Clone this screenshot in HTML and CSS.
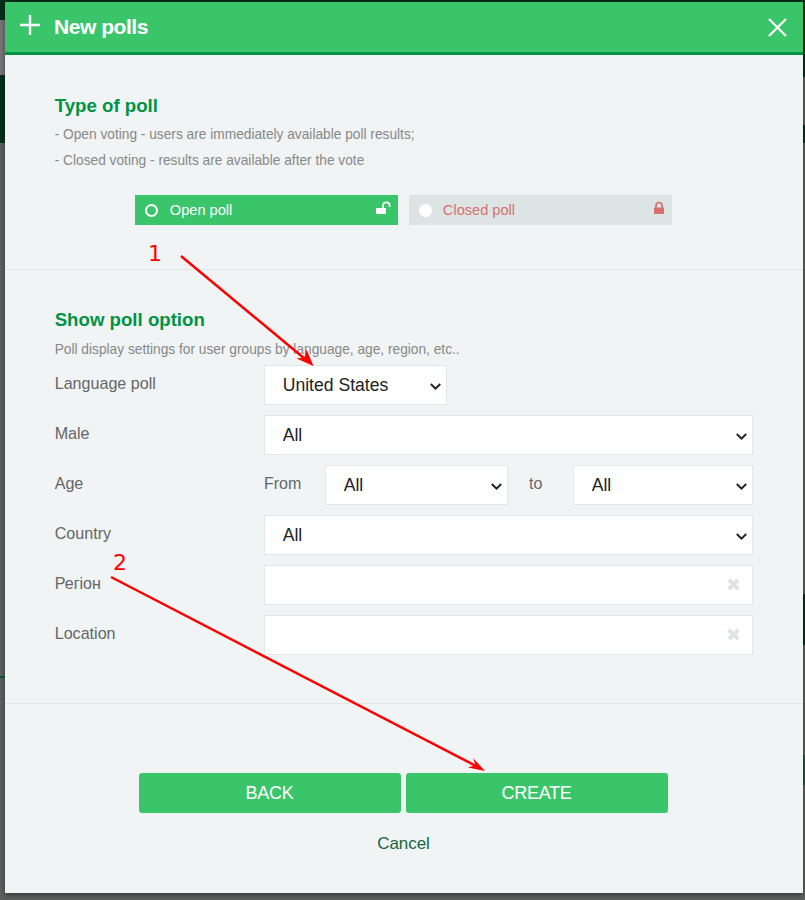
FILE: index.html
```html
<!DOCTYPE html>
<html lang="en">
<head>
<meta charset="utf-8">
<title>New polls</title>
<link rel="stylesheet" href="styles.css">
</head>
<body>
<div class="backdrop">
  <div class="side side-left">
    <div class="seg seg-dark h20"></div>
    <div class="seg seg-light h55"></div>
    <div class="seg seg-dark h68"></div>
    <div class="seg seg-grey h533"></div>
    <div class="seg seg-green h2"></div>
  </div>
  <div class="side side-right">
    <div class="seg seg-dark h77"></div>
    <div class="seg seg-grey h48"></div>
    <div class="seg seg-dark h18"></div>
    <div class="seg seg-grey h451"></div>
    <div class="seg seg-dark h51"></div>
    <div class="seg seg-grey h110"></div>
    <div class="seg seg-teal h30"></div>
  </div>
</div>
<main class="modal">
  <header class="modal-head">
    <svg class="icon-plus" viewBox="0 0 20 20" width="20" height="20"><path d="M10 0V20M0 10H20" stroke="#fff" stroke-width="2.4" fill="none"/></svg>
    <h1 class="modal-title">New polls</h1>
    <svg class="icon-close" viewBox="0 0 19 19" width="19" height="19"><path d="M1 1L18 18M18 1L1 18" stroke="#fff" stroke-width="2.2" fill="none"/></svg>
  </header>

  <section class="type-section">
    <h2 class="section-title">Type of poll</h2>
    <p class="hint hint-first">- Open voting - users are immediately available poll results;</p>
    <p class="hint hint-second">- Closed voting - results are available after the vote</p>
    <div class="toggles">
      <div class="toggle toggle-on">
        <span class="radio radio-on"></span>
        <span class="toggle-label">Open poll</span>
        <svg class="lock" viewBox="0 0 15 15" width="15" height="15"><path d="M0 7H10V13H0Z" fill="#fff"/><path d="M7 7V4.5C7 2.5 8.3 1.4 10.3 1.4C12.3 1.4 13.6 2.5 13.6 4.5V6" stroke="#fff" stroke-width="1.7" fill="none"/></svg>
      </div>
      <div class="toggle toggle-off">
        <span class="radio radio-off"></span>
        <span class="toggle-label">Closed poll</span>
        <svg class="lock" viewBox="0 0 15 15" width="15" height="15"><path d="M4 6.5H14V13H4Z" fill="#d97070"/><path d="M6 7V4.5C6 2.7 7.2 1.5 9 1.5C10.800 1.5 12 2.700 12 4.500V7" stroke="#d97070" stroke-width="1.7" fill="none"/></svg>
      </div>
    </div>
  </section>

  <section class="option-section">
    <h2 class="section-title">Show poll option</h2>
    <p class="hint hint-options">Poll display settings for user groups by language, age, region, etc..</p>
    <div class="form">
      <div class="row">
        <label class="row-label">Language poll</label>
        <select class="field field-select field-short"><option>United States</option></select>
      </div>
      <div class="row">
        <label class="row-label">Male</label>
        <select class="field field-select field-full"><option>All</option></select>
      </div>
      <div class="row">
        <label class="row-label">Age</label>
        <span class="age-word age-from">From</span>
        <select class="field field-select field-from"><option>All</option></select>
        <span class="age-word age-to">to</span>
        <select class="field field-select field-to"><option>All</option></select>
      </div>
      <div class="row">
        <label class="row-label">Country</label>
        <select class="field field-select field-full"><option>All</option></select>
      </div>
      <div class="row">
        <label class="row-label">Регіон</label>
        <div class="field field-full field-text">
          <svg class="icon-clear" viewBox="0 0 13 13" width="13" height="13"><path d="M1.800 1.800L11.200 11.200M11.200 1.800L1.800 11.200" stroke="#dce5e3" stroke-width="4" fill="none"/></svg>
        </div>
      </div>
      <div class="row">
        <label class="row-label">Location</label>
        <div class="field field-full field-text">
          <svg class="icon-clear" viewBox="0 0 13 13" width="13" height="13"><path d="M1.800 1.800L11.200 11.200M11.200 1.800L1.800 11.200" stroke="#dce5e3" stroke-width="4" fill="none"/></svg>
        </div>
      </div>
    </div>
  </section>

  <footer class="modal-foot">
    <div class="buttons">
      <button class="btn" type="button">BACK</button>
      <button class="btn" type="button">CREATE</button>
    </div>
    <a class="cancel">Cancel</a>
  </footer>
</main>

<svg class="annotations" viewBox="0 0 805 900" width="805" height="900">
  <line x1="181" y1="256" x2="308" y2="361.5" stroke="#ff0000" stroke-width="2.5"/>
  <path d="M313.5 366L296.500 358.500L304.500 357.500L306.500 349.500Z" fill="#ff0000"/>
  <line x1="111" y1="577" x2="478" y2="767" stroke="#ff0000" stroke-width="2.5"/>
  <path d="M485 771L468 767.500L475.500 765L473 758Z" fill="#ff0000"/>
</svg>
<span class="mark mark-one">1</span>
<span class="mark mark-two">2</span>
</body>
</html>
```

FILE: styles.css
```css
* { box-sizing: border-box; }

html, body {
  margin: 0;
  height: 900px;
  overflow: hidden;
}

body {
  position: relative;
  font-family: "Liberation Sans", Arial, sans-serif;
  background: #5f6060;
}

.backdrop {
  display: flex;
  justify-content: space-between;
  height: 900px;
  background: linear-gradient(#04301b 143px, #5f6060 143px);
}

.side-left { width: 5px; }
.side-right { width: 2px; }

.seg-dark { background: #04301b; }
.seg-grey { background: #5f6060; }
.seg-light { background: #777777; }
.seg-green { background: #0a5a2c; }
.seg-teal { background: #1a5a3a; }

.h2 { height: 2px; }
.h18 { height: 18px; }
.h20 { height: 20px; }
.h30 { height: 30px; }
.h48 { height: 48px; }
.h51 { height: 51px; }
.h55 { height: 55px; }
.h68 { height: 68px; }
.h77 { height: 77px; }
.h110 { height: 110px; }
.h451 { height: 451px; }
.h533 { height: 533px; }

.modal {
  position: absolute;
  left: 5px;
  top: 2px;
  width: 798px;
  height: 891px;
  display: flex;
  flex-direction: column;
  background: #f0f4f5;
  box-shadow: 0 2px 6px rgba(0, 0, 0, 0.45);
}

.modal-head {
  height: 53px;
  flex: none;
  display: flex;
  align-items: center;
  padding: 0 16px 0 15px;
  background: #3bc56b;
  border-bottom: 3px solid #009345;
}

.icon-plus {
  margin-bottom: 4px;
}

.modal-title {
  margin: 0 0 0 14px;
  font-size: 21px;
  font-weight: 700;
  letter-spacing: -0.45px;
  color: #fff;
}

.icon-close {
  margin-left: auto;
}

.type-section {
  height: 215px;
  flex: none;
  padding: 39px 50px 0 49.7px;
  border-bottom: 1px solid #e0e7e6;
}

.section-title {
  margin: 0;
  font-size: 18.65px;
  line-height: 24px;
  font-weight: 700;
  color: #009345;
}

.hint {
  margin: 0;
  font-size: 13.72px;
  line-height: 16px;
  color: #888888;
}

.hint-first { margin-top: 9px; }
.hint-second { margin-top: 10px; }
.hint-options { margin-top: 10px; }

.toggles {
  display: flex;
  justify-content: center;
  gap: 11px;
  margin-top: 26px;
  margin-right: 1px;
}

.toggle {
  width: 263px;
  height: 30px;
  display: flex;
  align-items: center;
  padding: 0 7px 0 10px;
  font-size: 14.6px;
}

.toggle-on {
  background: #3bc56b;
  color: #fff;
}

.toggle-off {
  background: #dce5e3;
  color: #d97070;
}

.radio {
  width: 13px;
  height: 13px;
  border-radius: 50%;
  flex: none;
}

.radio-on { border: 2px solid #fff; }
.radio-off { background: #fff; }

.toggle-label {
  margin-left: 12px;
}

.toggle-off .toggle-label {
  margin-left: 11px;
}

.lock {
  margin-left: auto;
  margin-top: -3px;
}

.option-section {
  height: 434px;
  flex: none;
  padding: 38px 50px 0 49.7px;
  border-bottom: 1px solid #e0e7e6;
}

.form {
  display: flex;
  flex-direction: column;
  gap: 10px;
  margin-top: 7px;
}

.row {
  display: flex;
  align-items: center;
  height: 40px;
}

.row-label {
  width: 209.3px;
  flex: none;
  margin-top: -3px;
  font-size: 16.1px;
  color: #666666;
}

.field {
  height: 40px;
  border: 1px solid #e0e7e6;
  background-color: #fff;
  border-radius: 0;
  font-family: inherit;
  font-size: 17.6px;
  color: #222222;
  padding: 0 0 0 17.7px;
}

.field-select {
  appearance: none;
  background-image: url("data:image/svg+xml,%3Csvg xmlns='http://www.w3.org/2000/svg' width='11' height='7' viewBox='0 0 11 7'%3E%3Cpath d='M0.8 1L5.5 5.6L10.2 1' stroke='%23222' stroke-width='2' fill='none'/%3E%3C/svg%3E");
  background-repeat: no-repeat;
  background-position: right 5px top 17px;
}

.field-short { width: 183px; }
.field-full { width: 489px; }
.field-from { width: 183px; }
.field-to { width: 180px; }

.field-text {
  display: flex;
  align-items: center;
  justify-content: flex-end;
  padding-right: 12px;
}

.icon-clear {
  margin-top: -1px;
}

.age-word {
  font-size: 16px;
  color: #666666;
  margin-top: -3px;
}

.age-from { width: 61px; }
.age-to { width: 44px; margin-left: 21px; }

.modal-foot {
  flex: 1;
  display: flex;
  flex-direction: column;
  align-items: center;
  padding-top: 69px;
  padding-right: 2px;
}

.buttons {
  display: flex;
  gap: 5px;
}

.btn {
  width: 262px;
  height: 40px;
  border: 0;
  border-radius: 3px;
  background: #3bc56b;
  color: #fff;
  font-family: inherit;
  font-size: 18px;
  letter-spacing: -0.3px;
  padding: 0;
}

.cancel {
  margin-top: 21px;
  margin-left: 1px;
  font-size: 17px;
  line-height: 20px;
  letter-spacing: -0.05px;
  color: #17643f;
}

.annotations {
  position: absolute;
  left: 0;
  top: 0;
  pointer-events: none;
}

.mark {
  position: absolute;
  font-family: "DejaVu Sans", sans-serif;
  font-size: 22px;
  line-height: 24px;
  color: #ff0000;
}

.mark-one { left: 148px; top: 242px; }
.mark-two { left: 113px; top: 551px; }
```
